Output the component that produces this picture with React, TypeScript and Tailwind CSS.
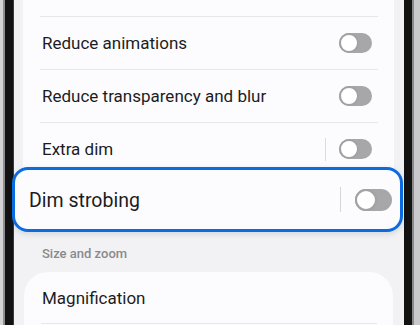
import React from "react";

function Toggle({ big = false }: { big?: boolean }) {
  return big ? (
    <div className="relative h-[22px] w-[37px] rounded-full bg-[#a7a7a9]">
      <div className="absolute left-0 top-0 h-[22px] w-[22px] rounded-full border-[2px] border-[#a2a2a4] bg-white" />
    </div>
  ) : (
    <div className="relative h-[20px] w-[33px] rounded-full bg-[#a7a7a9]">
      <div className="absolute left-0 top-0 h-[20px] w-[20px] rounded-full border-[2px] border-[#a2a2a4] bg-white" />
    </div>
  );
}

function Row({ label, divider = false, sep = true }: { label: string; divider?: boolean; sep?: boolean }) {
  return (
    <div className="flex h-[53px] flex-col">
      {sep && <div className="ml-[17px] mr-[16px] h-px bg-[#e7e7e9]" />}
      <div className="flex flex-1 items-center pl-[19px] pr-[22px]">
        <span className="flex-1 text-[17px] leading-none text-[#1c1c1e]">{label}</span>
        {divider && <div className="mr-[13px] h-[23px] w-px bg-[#dcdcde]" />}
        <Toggle />
      </div>
    </div>
  );
}

export default function App() {
  return (
    <div
      className="flex h-[325px] w-[420px] overflow-hidden bg-[#f2f2f4]"
      style={{ fontFamily: "Roboto, 'Noto Sans', sans-serif" }}
    >
      {/* left bezel */}
      <div className="flex h-full w-[14px] shrink-0">
        <div className="w-[3px] bg-[#d4d4d6]" />
        <div className="w-[2px] bg-[#8e8e90]" />
        <div className="w-[8px] bg-[#121212]" />
        <div className="w-px bg-[#3a3a3a]" />
      </div>

      {/* screen */}
      <div className="flex w-[390px] shrink-0 flex-col bg-[#f2f2f4]">
        <div className="ml-[9px] mr-[10px] -mt-[37px] flex flex-col rounded-[26px] bg-[#fcfcfe]">
          <div className="h-[53px]" />
          <Row label="Reduce animations" />
          <Row label="Reduce transparency and blur" />
          <Row label="Extra dim" divider />
          {/* highlighted row */}
          <div className="relative -ml-[11px] -mr-[9px] -mt-[8px] flex h-[65px] items-center rounded-[16px] border-[3px] border-[#0a6ce0] bg-[#fcfcfe] pl-[14px] pr-[8px] shadow-[0_2px_6px_rgba(0,0,0,0.12)]">
            <span className="flex-1 pt-[3px] text-[19.5px] leading-none text-[#1c1c1e]">Dim strobing</span>
            <div className="mr-[14px] h-[25px] w-px bg-[#d6d6d8]" />
            <Toggle big />
          </div>
        </div>

        <div className="mt-[14px] h-[16px] pl-[28px] text-[13px] font-medium leading-[16px] text-[#8a8a8c]">
          Size and zoom
        </div>

        <div className="ml-[10px] mr-[11px] mt-[10px] flex flex-col rounded-[24px] bg-[#fcfcfe]">
          <div className="flex h-[51px] items-center pl-[18px]">
            <span className="pt-[1px] text-[17px] leading-none text-[#1c1c1e]">Magnification</span>
          </div>
          <div className="ml-[17px] mr-[16px] h-px bg-[#e7e7e9]" />
          <div className="h-[40px]" />
        </div>
      </div>

      {/* right bezel */}
      <div className="flex h-full w-[16px] shrink-0">
        <div className="w-[8px] bg-[#121212]" />
        <div className="w-[2px] bg-[#8a8a8c]" />
        <div className="w-[6px] bg-[#c9c9cc]" />
      </div>
    </div>
  );
}
